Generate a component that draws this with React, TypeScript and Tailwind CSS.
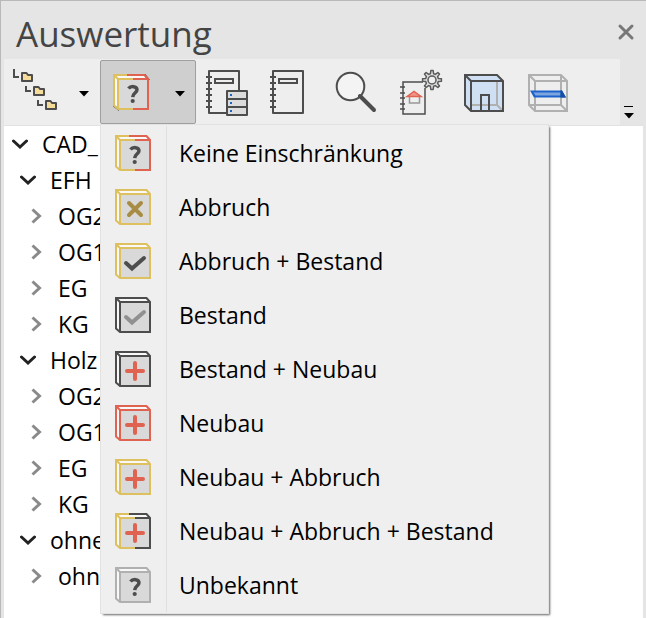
import React from "react";

const DARK = "#4d4d4d";
const YELLOW = "#dfc05f";
const RED = "#e06351";
const GRAY = "#b0b0b0";

type Glyph = "question" | "cross" | "check" | "plus";

function BoxShape({ left, right, glyph, glyphColor }: { left: string; right: string; glyph: Glyph; glyphColor: string }) {
  return (
    <g fill="none" strokeWidth="2">
      <path d="M1 1H32L35 5H5V35L1 32Z" fill="#f8f8f8" />
      <path d="M5 5H35V35H5Z" fill="#d9d9d9" />
      <path d="M14 1H31.500L35 5V35H20M20 5H35" stroke={right} />
      <path d="M14 1H1V31.500L5 35H20M5 35V5H20M1 1L5 5" stroke={left} />
      {glyph === "question" && (
        <g stroke={glyphColor} strokeWidth="3.500">
          <path d="M15.500 14.500C17.500 12 24 11.600 24 15.800C24 18.800 20 18.800 19.700 23.200" />
          <circle cx="19.700" cy="27" r="2.100" fill={glyphColor} stroke="none" />
        </g>
      )}
      {glyph === "cross" && <path d="M14 14L26 26M26 14L14 26" stroke={glyphColor} strokeWidth="4" strokeLinecap="round" />}
      {glyph === "check" && <path d="M11 20L17 25.500L29 15" stroke={glyphColor} strokeWidth="4" strokeLinecap="round" />}
      {glyph === "plus" && <path d="M20 12V28M12 20H28" stroke={glyphColor} strokeWidth="4" strokeLinecap="round" />}
    </g>
  );
}

function ToolSvg({ children }: { children: React.ReactNode }) {
  return (
    <svg viewBox="0 0 48 48" className="size-12 shrink-0" fill="none" stroke={DARK} strokeWidth="2" aria-hidden="true">
      {children}
    </svg>
  );
}

function Caret() {
  return (
    <svg viewBox="0 0 10 6" className="h-[6px] w-[10px]" aria-hidden="true">
      <path d="M0 0H10L5 5.500Z" fill="#000" />
    </svg>
  );
}

function Notebook() {
  return (
    <>
      <rect x="5" y="3" width="30" height="42" strokeLinejoin="round" />
      <path d="M2 9H8M2 15H8M2 21H8M2 27H8M2 33H8M2 39H8" />
      <rect x="11" y="11" width="18" height="4" />
    </>
  );
}

function TreeIcon() {
  return (
    <ToolSvg>
      {[0, 1, 2].map((i) => (
        <g key={i} transform={`translate(${i * 12} ${i * 14})`}>
          <path d={i === 0 ? "M2 1V9H7" : "M2 4V9H7"} />
          <path d="M10 5H14.500L16 7H20V13H10Z" fill="#f5dc9b" strokeLinejoin="round" />
        </g>
      ))}
    </ToolSvg>
  );
}

function GearIcon() {
  const points = Array.from({ length: 32 }, (_, i) => {
    const phase = i % 4;
    const radius = phase === 0 || phase === 1 ? 9.5 : 6.5;
    const angle = ((Math.floor(i / 4) * 45 + [-7, 7, 14, 31][phase] - 90) * Math.PI) / 180;
    return `${36 + radius * Math.cos(angle)},${12 + radius * Math.sin(angle)}`;
  }).join(" ");
  return (
    <g strokeWidth="1.500" stroke="#5a5a5a">
      <polygon points={points} fill="#dedede" strokeLinejoin="round" />
      <circle cx="36" cy="12" r="4" fill="#efefef" />
    </g>
  );
}

const tools: { label: string; icon: React.ReactNode }[] = [
  {
    label: "Bericht mit Datenbank",
    icon: (
      <>
        <Notebook />
        <path d="M23 23H43V47H23Z" fill="#dcdcdc" strokeLinejoin="round" />
        <path d="M23 31H43M23 39H43" />
        <path d="M26 26H28V28H26ZM26 34H28V36H26ZM26 42H28V44H26Z" fill="#1d62cc" stroke="none" />
      </>
    ),
  },
  { label: "Bericht", icon: <Notebook /> },
  {
    label: "Suchen",
    icon: (
      <>
        <circle cx="18.500" cy="18.500" r="13.800" fill="#f4f4f4" />
        <path d="M28 28L42 42" strokeWidth="4" strokeLinecap="round" />
        <path d="M27 27L31 31" />
      </>
    ),
  },
  {
    label: "Berichtseinstellungen",
    icon: (
      <>
        <path d="M27 14H7V46H29V20" strokeWidth="1.500" />
        <path d="M4 19H9M4 25H9M4 30H9M4 36H9M4 41H9" strokeWidth="1.500" />
        <path d="M13.500 28V35H23.500V28" fill="#efefef" stroke="#999" strokeWidth="1.500" />
        <path d="M11 28.500L18 23.500L25 28.500Z" fill="#f19489" stroke={RED} strokeWidth="1.500" />
        <GearIcon />
      </>
    ),
  },
  {
    label: "Raumansicht",
    icon: (
      <>
        <path d="M5 7H37L43 13V43H11L5 37Z" fill="#cfe0f5" stroke="none" />
        <path d="M37 13V37H11M37 37L43 43" stroke={GRAY} />
        <path d="M5 7H37L43 13V43H11L5 37ZM5 7L11 13M11 43V13H43M21 43V27H29V43" />
      </>
    ),
  },
  {
    label: "Schnittansicht",
    icon: (
      <>
        <path d="M5 7H37L43 13V43H11L5 37ZM5 7L11 13M11 43V13H43M37 7V37H5M37 37L43 43" stroke={GRAY} />
        <path d="M6 22.500H38L42 29.500H10Z" fill="#1d62cc" stroke="none" />
        <path d="M9.500 24.500H36.500V27.500H11.500Z" fill="#7fa5dd" stroke="none" />
        <path d="M36.500 22.500H38L42 29.500H36.500Z" fill="#174d9f" stroke="none" />
      </>
    ),
  },
];

const menu: { label: string; left: string; right: string; glyph: Glyph; color: string }[] = [
  { label: "Keine Einschränkung", left: YELLOW, right: RED, glyph: "question", color: DARK },
  { label: "Abbruch", left: YELLOW, right: YELLOW, glyph: "cross", color: "#a98c43" },
  { label: "Abbruch + Bestand", left: YELLOW, right: YELLOW, glyph: "check", color: DARK },
  { label: "Bestand", left: DARK, right: DARK, glyph: "check", color: "#909090" },
  { label: "Bestand + Neubau", left: DARK, right: DARK, glyph: "plus", color: RED },
  { label: "Neubau", left: RED, right: RED, glyph: "plus", color: RED },
  { label: "Neubau + Abbruch", left: YELLOW, right: YELLOW, glyph: "plus", color: RED },
  { label: "Neubau + Abbruch + Bestand", left: YELLOW, right: DARK, glyph: "plus", color: RED },
  { label: "Unbekannt", left: GRAY, right: GRAY, glyph: "question", color: DARK },
];

const tree: { label: string; level: 0 | 1 | 2 }[] = [
  { label: "CAD_", level: 0 },
  { label: "EFH", level: 1 },
  { label: "OG2", level: 2 },
  { label: "OG1", level: 2 },
  { label: "EG", level: 2 },
  { label: "KG", level: 2 },
  { label: "Holz", level: 1 },
  { label: "OG2", level: 2 },
  { label: "OG1", level: 2 },
  { label: "EG", level: 2 },
  { label: "KG", level: 2 },
  { label: "ohne", level: 1 },
  { label: "ohn", level: 2 },
];

const indent = { 0: "pl-2", 1: "pl-4", 2: "pl-6" };

export default function App() {
  return (
    <div className="flex min-h-screen flex-col border-t border-l border-[#b9b9b9] bg-[#e5e5e5] pr-[3px] pl-[3px] font-['Open_Sans','Noto_Sans',sans-serif] text-[23px] text-black">
      <header className="flex h-[58px] items-center justify-between pr-[7px] pl-3">
        <h1 className="pt-2 text-[35px] leading-[48px] text-[#444]">Auswertung</h1>
        <button type="button" aria-label="Schließen" className="pt-1">
          <svg viewBox="0 0 20 20" className="size-5" aria-hidden="true">
            <path d="M4 4L16 16M16 4L4 16" stroke="#777" strokeWidth="3" strokeLinecap="round" />
          </svg>
        </button>
      </header>

      <div className="flex h-[67px] border-b border-[#e2e2e2] bg-[#eee]">
        <div className="flex grow items-start pt-px">
          <button type="button" aria-label="Struktur" className="flex h-16 w-24 items-center pl-2">
            <TreeIcon />
            <span className="flex grow justify-center pt-1 pl-2">
              <Caret />
            </span>
          </button>
          <div className="relative">
            <button
              type="button"
              aria-label="Einschränkung"
              aria-haspopup="menu"
              aria-expanded="true"
              className="flex h-16 w-24 items-center rounded-xs border border-[#9f9f9f] bg-[#cfcfcf] pl-[7px]"
            >
              <ToolSvg>
                <g transform="translate(5 6)">
                  <BoxShape left={YELLOW} right={RED} glyph="question" glyphColor={DARK} />
                </g>
              </ToolSvg>
              <span className="flex grow justify-center pt-1 pl-2">
                <Caret />
              </span>
            </button>
            <ul
              role="menu"
              className="absolute top-full left-0 w-[449px] border border-[#e2e2e2] bg-[#efefef] py-px shadow-[2px_2px_2px_-1px_#666]"
            >
              {menu.map((item) => (
                <li key={item.label} role="none">
                  <button type="button" role="menuitem" className="flex h-[54px] w-full items-center text-left">
                    <span className="flex h-full w-[66px] shrink-0 items-center border-r border-[#e0e0e0] pl-[14px]">
                      <svg viewBox="0 0 36 36" className="size-9" aria-hidden="true">
                        <BoxShape left={item.left} right={item.right} glyph={item.glyph} glyphColor={item.color} />
                      </svg>
                    </span>
                    <span className="pl-3 whitespace-nowrap">{item.label}</span>
                  </button>
                </li>
              ))}
            </ul>
          </div>
          {tools.map((tool) => (
            <button key={tool.label} type="button" aria-label={tool.label} className="flex h-16 w-16 items-center justify-center">
              <ToolSvg>{tool.icon}</ToolSvg>
            </button>
          ))}
        </div>
        <button type="button" aria-label="Weitere Schaltflächen" className="flex w-[23px] flex-col items-center justify-end gap-[6px] bg-[#e5e5e5] pr-[6px] pb-[6px]">
          <span className="h-px w-[9px] bg-black" />
          <Caret />
        </button>
      </div>

      <ul role="tree" aria-label="Auswertung" className="grow bg-white">
        {tree.map((node, index) => (
          <li key={index} role="treeitem" aria-level={node.level + 1} aria-expanded={node.level < 2} aria-selected="false">
            <button type="button" className={`flex h-9 items-center gap-[14px] ${indent[node.level]}`}>
              <svg viewBox="0 0 16 16" className="size-4" fill="none" strokeWidth="3" aria-hidden="true">
                {node.level < 2 ? (
                  <path d="M1.500 5L8 11L14.500 5" stroke="#222" strokeLinecap="round" />
                ) : (
                  <path d="M4.500 1.500L11.500 8L4.500 14.500" stroke="#8a8a8a" />
                )}
              </svg>
              <span>{node.label}</span>
            </button>
          </li>
        ))}
      </ul>
    </div>
  );
}
